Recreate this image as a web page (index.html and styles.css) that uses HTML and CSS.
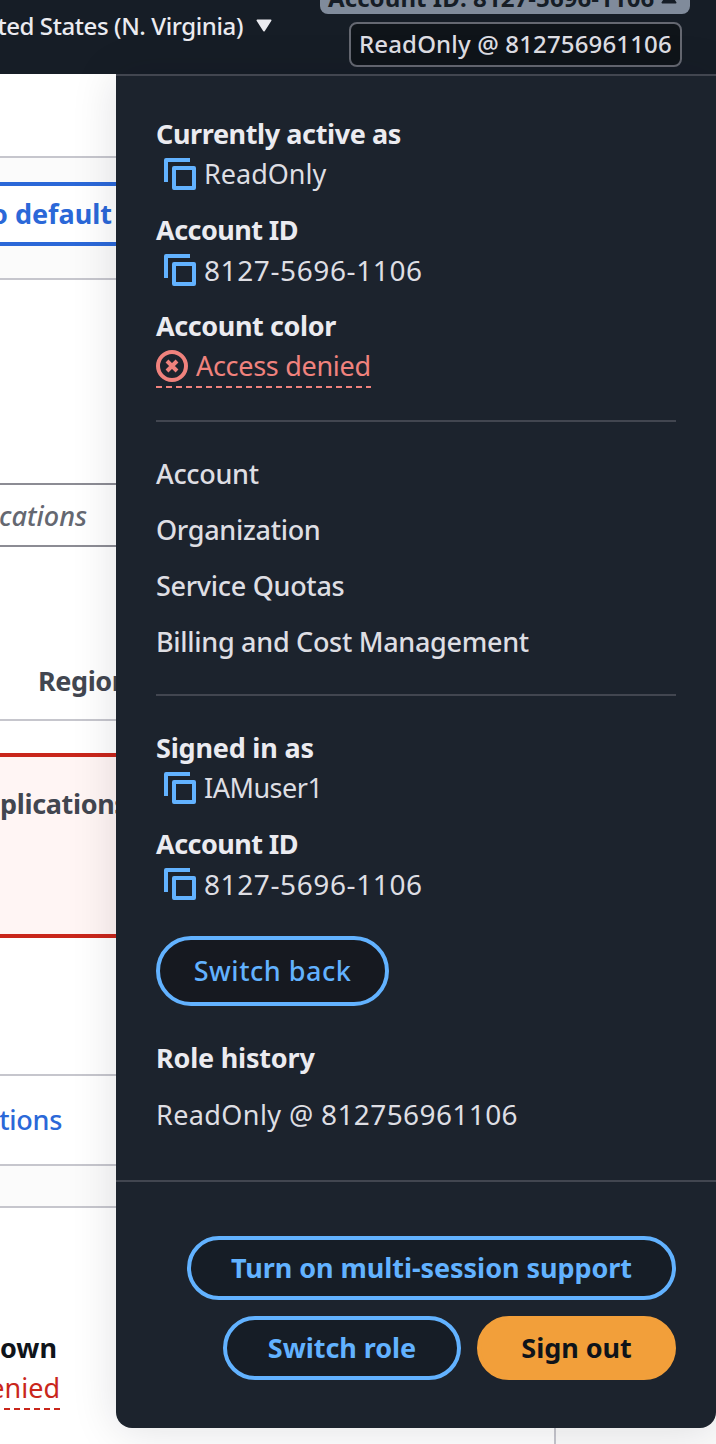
FILE: index.html
```html
<!DOCTYPE html>
<html lang="en">
<head>
<meta charset="utf-8">
<title>Console account menu</title>
<link rel="stylesheet" href="styles.css">
</head>
<body>
<svg class="defs" width="0" height="0">
  <symbol id="copy" viewBox="0 0 32 32">
    <path d="M26 2H2V24" fill="none" stroke="currentColor" stroke-width="4" stroke-linejoin="round"/>
    <rect x="10" y="10" width="20" height="20" fill="none" stroke="currentColor" stroke-width="4" stroke-linejoin="round"/>
  </symbol>
</svg>
<header class="topbar">
  <div class="region"><span>ted States (N. Virginia)</span>
    <svg class="caret" viewBox="0 0 16 13"><path d="M1.3 1.3H14.7L8 11.7Z" fill="currentColor" stroke="currentColor" stroke-width="1.6" stroke-linejoin="round"/></svg>
  </div>
  <div class="session">
    <div class="account"><span>Account ID: 8127-5696-1106</span>
      <svg class="caret" viewBox="0 0 16 13"><path d="M1.3 11.7H14.7L8 1.3Z" fill="currentColor" stroke="currentColor" stroke-width="1.6" stroke-linejoin="round"/></svg>
    </div>
    <div class="role">ReadOnly @ 812756961106</div>
  </div>
</header>
<main class="page">
  <div class="block blank"></div>
  <div class="band"><div class="outline"><span>o default</span></div></div>
  <div class="block gap"></div>
  <div class="search"><span>cations</span></div>
  <div class="block heading"><span>Region</span></div>
  <div class="error"><span>plications</span></div>
  <div class="block spacer"></div>
  <div class="block more"><span>tions</span></div>
  <div class="block strip"></div>
  <div class="status">
    <div class="card">
      <div class="own"><span>own</span></div>
      <div class="enied"><span>enied</span><svg class="dash" width="60" height="2"><path d="M60 1H0" stroke="currentColor" stroke-width="2" stroke-dasharray="6 4"/></svg></div>
    </div>
  </div>
</main>
<aside class="menu">
  <section class="info">
    <h2 class="t-active">Currently active as</h2>
    <div class="value"><svg class="copy"><use href="#copy"/></svg><span>ReadOnly</span></div>
    <h2 class="next">Account ID</h2>
    <div class="value"><svg class="copy"><use href="#copy"/></svg><span class="num">8127-5696-1106</span></div>
    <h2 class="next t-color">Account color</h2>
    <div class="denied">
      <div class="denied-row">
        <svg class="cross" viewBox="0 0 32 32"><circle cx="16" cy="16" r="14" fill="none" stroke="currentColor" stroke-width="4"/><path d="M11 11L21 21M21 11L11 21" stroke="currentColor" stroke-width="4"/></svg>
        <span>Access denied</span>
      </div>
      <svg class="dash" width="215" height="2"><path d="M0 1H215" stroke="currentColor" stroke-width="2" stroke-dasharray="6 4"/></svg>
    </div>
  </section>
  <nav class="links">
    <a>Account</a><a>Organization</a><a>Service Quotas</a><a>Billing and Cost Management</a>
  </nav>
  <section class="signed">
    <h2 class="t-wide">Signed in as</h2>
    <div class="value"><svg class="copy"><use href="#copy"/></svg><span class="user">IAMuser1</span></div>
    <h2 class="next">Account ID</h2>
    <div class="value"><svg class="copy"><use href="#copy"/></svg><span class="num">8127-5696-1106</span></div>
    <button class="btn back">Switch back</button>
    <h2 class="t-wide">Role history</h2>
    <a class="history">ReadOnly @ <span class="digits">812756961106</span></a>
  </section>
  <footer class="actions">
    <button class="btn multi">Turn on multi-session support</button>
    <button class="btn switch">Switch role</button>
    <button class="btn out">Sign out</button>
  </footer>
</aside>
</body>
</html>
```
FILE: styles.css
```css
* { box-sizing: border-box; }
body {
  margin: 0; width: 716px; height: 1444px; overflow: hidden; position: relative;
  background: #fff; color: #dedee3;
  font: 400 27px/40px "Noto Sans", "Open Sans", sans-serif;
}
span { white-space: nowrap; }
svg { display: block; flex: none; }
.defs { position: absolute; }

.topbar { height: 74px; background: #161d26; display: flex; justify-content: space-between; overflow: hidden; }
.region { width: 272px; display: flex; justify-content: flex-end; gap: 13px; padding-top: 8px; font-size: 24px; line-height: 36px; font-weight: 500; letter-spacing: -0.4px; color: #ebebf0; }
.caret { width: 16px; height: 13px; margin-top: 11px; }
.session { width: 370px; margin-right: 26px; display: flex; flex-direction: column; align-items: flex-end; }
.account { flex: none; width: 370px; height: 40px; margin-top: -26px; padding-left: 8px; border-radius: 8px; background: #808b9b; color: #161d26; font-weight: 700; font-size: 24px; line-height: 48px; letter-spacing: 0.08px; display: flex; gap: 7px; }
.account .caret { margin-top: 17px; }
.role { flex: none; width: 333px; height: 45px; margin: 8px 8px 0 0; padding-left: 8px; border: 2px solid #656871; border-radius: 8px; background: #0f1419; color: #dedee3; font-size: 24px; line-height: 40px; font-weight: 500; letter-spacing: 0.15px; white-space: nowrap; }

.page { height: 1370px; display: flex; flex-direction: column; background: #fff; }
.page > * { flex: none; }
.block { border-bottom: 2px solid #c6c6cd; }
.blank { height: 84px; }
.band { height: 122px; background: #fbfbfb; border-bottom: 2px solid #c6c6cd; padding-top: 24px; }
.outline { height: 64px; border: solid #2b68d8; border-width: 4px 0; background: #fff; color: #2b68d8; font-weight: 700; line-height: 56px; width: 160px; display: flex; }
.outline span { width: 112px; display: flex; justify-content: flex-end; }
.gap { height: 203px; border: 0; }
.search { height: 64px; border: solid #8c8c94; border-width: 2px 0; color: #656871; font-style: italic; font-weight: 500; line-height: 62px; width: 200px; }
.search span { display: flex; width: 87px; justify-content: flex-end; }
.heading { height: 174px; padding: 114px 0 0 38px; color: #424650; font-weight: 700; letter-spacing: -0.4px; }
.error { height: 185px; margin-top: 32px; border: solid #c9261b; border-width: 4px 0; background: #fff5f4; color: #424650; font-weight: 700; padding: 27px 0 0 0; letter-spacing: -0.35px; }
.spacer { height: 138px; }
.more { height: 90px; color: #2b68d8; padding-top: 24px; font-weight: 500; letter-spacing: -0.3px; }
.more span { display: flex; width: 62px; justify-content: flex-end; }
.strip { height: 42px; background: #fbfbfb; }
.status { height: 236px; background: #fbfbfb; }
.card { width: 556px; height: 236px; background: #fff; border-right: 2px solid #c6c6cd; padding-top: 120px; }
.own { width: 57px; display: flex; justify-content: flex-end; color: #0f141a; font-weight: 700; }
.enied { width: 60px; color: #c9261b; display: flex; flex-direction: column; align-items: flex-end; }

.menu {
  position: absolute; left: 116px; top: 74px; width: 600px; height: 1354px;
  background: #1c232d; border-top: 2px solid #424650; border-radius: 0 0 16px 16px;
  box-shadow: 0 2px 45px 1px rgba(15, 15, 30, 0.12);
  display: flex; flex-direction: column;
}
.menu > * { flex: none; }
h2 { margin: 0; font-size: 27px; line-height: 40px; font-weight: 700; color: #ebebf0; letter-spacing: -0.55px; }
.t-active { letter-spacing: -0.4px; }
.t-color { letter-spacing: -0.4px; }
.t-wide { letter-spacing: -0.2px; }
.next { margin-top: 16px; }
.value { height: 40px; display: flex; gap: 8px; padding-left: 8px; }
.copy { width: 32px; height: 32px; margin-top: 4px; color: #62b2ff; }
.num { font-size: 28px; letter-spacing: 0.6px; }
.user { letter-spacing: -0.5px; }
.info { margin: 0 40px; padding-top: 38px; height: 346px; border-bottom: 2px solid #424650; }
.denied { width: 215px; color: #f0827d; }
.denied-row { display: flex; gap: 8px; letter-spacing: -0.3px; }
.cross { width: 32px; height: 32px; margin-top: 4px; }
.links { margin: 0 40px; height: 274px; padding-top: 24px; border-bottom: 2px solid #424650; display: flex; flex-direction: column; font-weight: 500; letter-spacing: -0.3px; }
.links a { line-height: 56px; }
.signed { height: 486px; padding: 32px 40px 0; border-bottom: 2px solid #424650; }
.btn { display: block; border: 4px solid #62b2ff; border-radius: 35px; background: #161d26; color: #62b2ff; font: 700 27px/40px "Noto Sans", "Open Sans", sans-serif; padding: 0; white-space: nowrap; letter-spacing: -0.05px; }
.back { width: 233px; height: 70px; margin: 32px 0; background: #161920; font-weight: 500; letter-spacing: 0.5px; }
.history { display: block; line-height: 56px; margin-top: 8px; letter-spacing: 0.4px; }
.digits { font-size: 28px; letter-spacing: 0.4px; }
.actions { display: flex; flex-wrap: wrap; justify-content: flex-end; gap: 16px; padding: 54px 40px 0; }
.actions .btn { height: 64px; border-radius: 32px; }
.actions .multi { width: 489px; }
.actions .switch { width: 238px; }
.actions .out { width: 199px; background: #f29f3a; border-color: #f29f3a; color: #0f141a; }
```
